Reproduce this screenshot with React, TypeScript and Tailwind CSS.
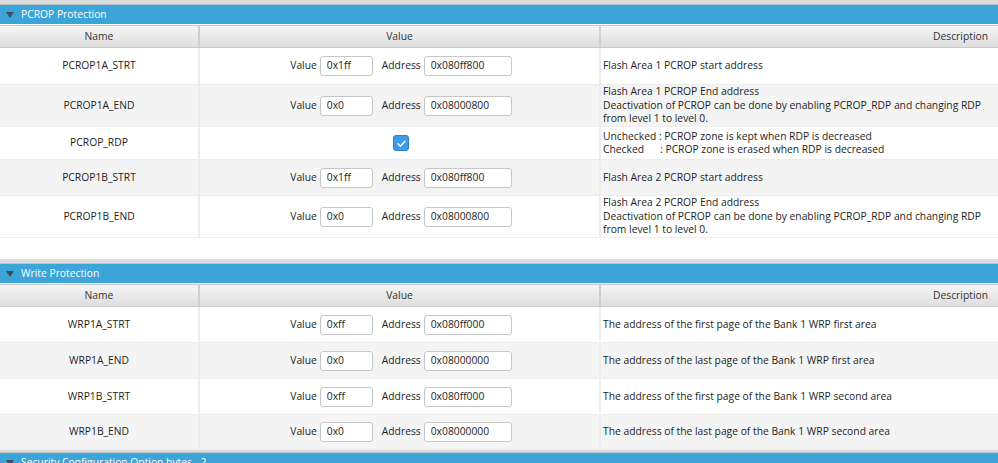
import React from "react";

type Row = {
  name: string;
  value?: string;
  address?: string;
  checked?: boolean;
  desc: string[];
  h: string;
};

const pcrop: Row[] = [
  { name: "PCROP1A_STRT", value: "0x1ff", address: "0x080ff800", desc: ["Flash Area 1 PCROP start address"], h: "h-[37px]" },
  {
    name: "PCROP1A_END",
    value: "0x0",
    address: "0x08000800",
    desc: [
      "Flash Area 1 PCROP End address",
      "Deactivation of PCROP can be done by enabling PCROP_RDP and changing RDP",
      "from level 1 to level 0.",
    ],
    h: "h-[42px]",
  },
  {
    name: "PCROP_RDP",
    checked: true,
    desc: ["Unchecked : PCROP zone is kept when RDP is decreased", "Checked\u00a0\u00a0\u00a0\u00a0\u00a0 : PCROP zone is erased when RDP is decreased"],
    h: "h-[33px]",
  },
  { name: "PCROP1B_STRT", value: "0x1ff", address: "0x080ff800", desc: ["Flash Area 2 PCROP start address"], h: "h-[36px]" },
  {
    name: "PCROP1B_END",
    value: "0x0",
    address: "0x08000800",
    desc: [
      "Flash Area 2 PCROP End address",
      "Deactivation of PCROP can be done by enabling PCROP_RDP and changing RDP",
      "from level 1 to level 0.",
    ],
    h: "h-[42px]",
  },
];

const wrp: Row[] = [
  { name: "WRP1A_STRT", value: "0xff", address: "0x080ff000", desc: ["The address of the first page of the Bank 1 WRP first area"], h: "h-[36px]" },
  { name: "WRP1A_END", value: "0x0", address: "0x08000000", desc: ["The address of the last page of the Bank 1 WRP first area"], h: "h-[36px]" },
  { name: "WRP1B_STRT", value: "0xff", address: "0x080ff000", desc: ["The address of the first page of the Bank 1 WRP second area"], h: "h-[36px]" },
  { name: "WRP1B_END", value: "0x0", address: "0x08000000", desc: ["The address of the last page of the Bank 1 WRP second area"], h: "h-[35px]" },
];

function SectionBar({ title, thin }: { title: string; thin?: boolean }) {
  return (
    <div className={thin ? "border-t-[2px] border-[#dcdcdc]" : "border-t-[4px] border-[#dcdcdc]"}>
      <div className="flex h-[20px] items-center gap-[7px] border-t border-[#b8c4cc] bg-[#3ba4d9] pl-[6px] text-white">
        <svg viewBox="0 0 8 6" className="h-[6px] w-[8px]" aria-hidden>
          <path d="M0 0h8L4 6z" fill="#3c4f60" />
        </svg>
        <span>{title}</span>
      </div>
    </div>
  );
}

function ColumnHeader() {
  return (
    <div className="mt-[1px] grid h-[23px] grid-cols-[200px_401px_1fr] border-y border-[#c9c9c9] bg-gradient-to-b from-[#f5f5f5] to-[#dedede] text-[#333]">
      <div className="flex items-center justify-center border-r-2 border-[#cfcfcf]">Name</div>
      <div className="flex items-center justify-center border-r-2 border-[#cfcfcf]">Value</div>
      <div className="flex items-center justify-end pr-[10px]">Description</div>
    </div>
  );
}

function Field({ label, text, w }: { label: string; text: string; w: string }) {
  return (
    <div className="flex items-center gap-[3px]">
      <span>{label}</span>
      <div className={`${w} flex h-[20px] items-center rounded-[3px] border border-[#c6c6c6] bg-white pl-[6px]`}>{text}</div>
    </div>
  );
}

function TableRow({ row, alt }: { row: Row; alt: boolean }) {
  return (
    <div
      className={`grid grid-cols-[200px_401px_1fr] border-b border-[#ededed] ${row.h} ${alt ? "bg-[#f4f4f4]" : "bg-white"}`}
    >
      <div className="flex items-center justify-center border-r-2 border-[#ececec]">{row.name}</div>
      <div className="flex items-center justify-center gap-[9px] border-r-2 border-[#ececec] pl-[3px]">
        {row.checked ? (
          <div className="flex h-[16px] w-[16px] items-center justify-center rounded-[3px] border border-[#2f7fc4] bg-[#3d9be9]">
            <svg viewBox="0 0 12 12" className="h-[11px] w-[11px]" aria-hidden>
              <path d="M2.2 6.3l2.6 2.6 5-5.4" fill="none" stroke="white" strokeWidth="1.6" strokeLinecap="round" strokeLinejoin="round" />
            </svg>
          </div>
        ) : (
          <>
            <Field label="Value" text={row.value ?? ""} w="w-[53px]" />
            <Field label="Address" text={row.address ?? ""} w="w-[88px]" />
          </>
        )}
      </div>
      <div className="flex flex-col justify-center overflow-hidden whitespace-nowrap pl-[2px] leading-[13.5px]">
        {row.desc.map((d) => (
          <div key={d}>{d}</div>
        ))}
      </div>
    </div>
  );
}

export default function App() {
  return (
    <div
      className="h-[463px] w-[998px] overflow-hidden bg-white text-[10.3px] text-[#1e1e1e]"
      style={{ fontFamily: '"Open Sans", "Noto Sans", sans-serif' }}
    >
      <SectionBar title="PCROP Protection" />
      <ColumnHeader />
      {pcrop.map((r, i) => (
        <TableRow key={r.name} row={r} alt={i % 2 === 1} />
      ))}
      <div className="h-[21px]" />
      <SectionBar title="Write Protection" />
      <ColumnHeader />
      {wrp.map((r, i) => (
        <TableRow key={r.name} row={r} alt={i % 2 === 1} />
      ))}
      <SectionBar title="Security Configuration Option bytes - 2" thin />
    </div>
  );
}
